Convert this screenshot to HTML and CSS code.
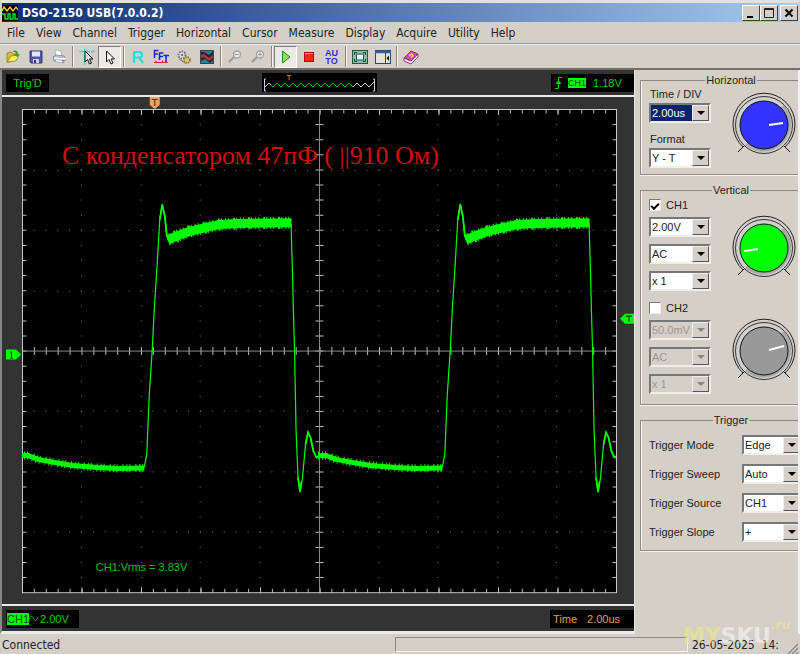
FILE: index.html
```html
<!DOCTYPE html>
<html lang="en">
<head>
<meta charset="utf-8">
<title>DSO-2150 USB(7.0.0.2)</title>
<link rel="stylesheet" href="styles.css">
</head>
<body>
<header class="titlebar">
  <svg class="app-icon" viewBox="0 0 16 16" width="16" height="16" aria-hidden="true"><rect width="16" height="16" fill="#000"/><path d="M0 6 2 2 5 6 8 2 11 6 14 2 16 5" fill="none" stroke="#e8e010" stroke-width="1.3"/><path d="M0 9H3V14H6V9H8V14H11V9H13V14H16" fill="none" stroke="#10e030" stroke-width="1.4"/></svg>
  <h1>DSO-2150 USB(7.0.0.2)</h1>
  <div class="window-buttons">
    <button aria-label="Minimize"><svg viewBox="0 0 12 12" width="12" height="12"><path d="M2 10H8" stroke="#000" stroke-width="2"/></svg></button>
    <button aria-label="Maximize"><svg viewBox="0 0 12 12" width="12" height="12"><path d="M1.500 1.500H10.500V10.500H1.500ZM1 2.500H11" fill="none" stroke="#222"/></svg></button>
    <button class="close" aria-label="Close"><svg viewBox="0 0 12 12" width="12" height="12"><path d="M2.500 2.500 9.500 9.500M9.500 2.500 2.500 9.500" stroke="#000" stroke-width="2"/></svg></button>
  </div>
</header>

<nav class="menu">
  <a href="#">File</a><a href="#">View</a><a href="#">Channel</a><a href="#">Trigger</a><a href="#">Horizontal</a><a href="#">Cursor</a><a href="#">Measure</a><a href="#">Display</a><a href="#">Acquire</a><a href="#">Utility</a><a href="#">Help</a>
</nav>

<div class="toolbar" role="toolbar">
  <div class="tools">
    <button aria-label="Open"><svg viewBox="0 0 16 16"><path d="M2 4 6 3 8 5 11 5V8L5 13 2 13Z" fill="#d8c020" stroke="#857410" stroke-width=".7"/><path d="M2 13 6 7 14 6 11 12Z" fill="#ffec60" stroke="#857410" stroke-width=".7"/><path d="M7 3C10 0 13 2 13 5L14.500 5 12 8 9 5H11C11 3 9 2.500 7 3Z" fill="#3c9c30"/></svg></button>
    <button aria-label="Save"><svg viewBox="0 0 16 16"><path d="M2 2H14V14H3L2 13Z" fill="#5655a8" stroke="#353478"/><path d="M4 2.500H12V7.500H4Z" fill="#e4e8f8"/><path d="M5 10H11V14H5Z" fill="#d0d0e4"/><path d="M6 11H8V14H6Z" fill="#353478"/></svg></button>
    <button aria-label="Print"><svg viewBox="0 0 16 16"><path d="M4 1 10 2 11 8 5 8Z" fill="#fff" stroke="#9aa0b0" stroke-width=".7"/><path d="M2 8 5 6 13 7 15 10 12 14 3 12Z" fill="#b8bfca" stroke="#70757f" stroke-width=".7"/><path d="M3 9 12 10 15 9.500M5 11.500 11 13" stroke="#f8f8f8" fill="none" stroke-width="1.300"/><path d="M11 11.500H13" stroke="#3878c0"/></svg></button>
  </div>
  <div class="tools">
    <button aria-label="Cursor lines"><svg viewBox="0 0 16 16"><path d="M0 2.500H16M5.500 0V16" stroke="#40d8d8" stroke-width="1.300" stroke-dasharray="5 1"/><path d="M6 2V13L8.500 10.500 10.500 15 12.500 14 10.500 10H14Z" fill="#ddd" stroke="#111"/></svg></button>
    <button class="pressed" aria-label="Pointer"><svg viewBox="0 0 16 16"><path d="M4.500 2V13L7 10.500 9 15 11 14 9 10H12.500Z" fill="#fff" stroke="#111"/></svg></button>
  </div>
  <div class="tools">
    <button aria-label="Reference"><svg viewBox="0 0 16 16"><path d="M4 14V3H9C13 3 13 8.500 9 8.500H4M9 8.500 13 14" fill="none" stroke="#28dce4" stroke-width="2.200"/></svg></button>
    <button aria-label="FFT"><svg viewBox="0 0 16 16"><path d="M1.500 9V1.500H5.500M1.500 5H5M6.500 11V4H10.500M6.500 7.500H10M10.500 6.500H16M13 6.500V13" fill="none" stroke="#2222dc" stroke-width="1.600"/><path d="M1 13.500H15M3 11.500V14M9.500 11.500V14" stroke="#e02040" stroke-width="1.200"/></svg></button>
    <button aria-label="Settings"><svg viewBox="0 0 16 16"><circle cx="6" cy="6" r="3.500" fill="#ddd" stroke="#777" stroke-width="2" stroke-dasharray="1.600 1"/><circle cx="11" cy="11" r="3" fill="#e2c36e" stroke="#8d7436" stroke-width="1.800" stroke-dasharray="1.400 1"/><circle cx="6" cy="6" r="1" fill="#555"/><path d="M3 10 9 14" stroke="#777"/></svg></button>
    <button aria-label="Pass fail"><svg viewBox="0 0 16 16"><rect x="1.500" y="1.500" width="13" height="13" fill="#238388" stroke="#304850"/><path d="M2 3 5 3 10 6 14 2V11L11 14 6 10 2 12Z" fill="#26262c"/><path d="M2 6 5 5 10 9 14 6V9L10 12 5 8 2 9Z" fill="#b83246"/></svg></button>
  </div>
  <div class="tools">
    <button aria-label="Zoom out" disabled><svg viewBox="0 0 16 16"><circle cx="10" cy="5.500" r="3.500" fill="#e8e8e8" stroke="#a0a0a0" stroke-width="1.300"/><path d="M8 5.500H12" stroke="#999"/><path d="M7 8 2 13" stroke="#999" stroke-width="2"/></svg></button>
    <button aria-label="Zoom in" disabled><svg viewBox="0 0 16 16"><circle cx="10" cy="5.500" r="3.500" fill="#e8e8e8" stroke="#a0a0a0" stroke-width="1.300"/><path d="M8 5.500H12M10 3.500V7.500" stroke="#999"/><path d="M7 8 2 13" stroke="#999" stroke-width="2"/></svg></button>
  </div>
  <div class="tools">
    <button class="pressed" aria-label="Run"><svg viewBox="0 0 16 16"><path d="M4.500 2 12 8 4.500 14Z" fill="#7fe650" stroke="#218a20"/></svg></button>
    <button aria-label="Stop"><svg viewBox="0 0 16 16"><rect x="3.500" y="3.500" width="9" height="9" fill="#f0281c" stroke="#a81010"/><path d="M4 4.500H12" stroke="#ff8878"/></svg></button>
    <button class="auto" aria-label="Auto set"><span>AU</span><span>TO</span></button>
  </div>
  <div class="tools">
    <button aria-label="Full screen"><svg viewBox="0 0 16 16"><rect x=".5" y="1.500" width="15" height="13" fill="#8cc0a4" stroke="#24533e"/><rect x="4.500" y="5" width="7" height="6" fill="#e0f5fa" stroke="#205070"/><path d="M2.500 6V3.500H5M11 3.500H13.500V6M13.500 10V12.500H11M5 12.500H2.500V10" fill="none" stroke="#174c36"/></svg></button>
    <button aria-label="Toggle panel"><svg viewBox="0 0 16 16"><rect x=".5" y="1.500" width="15" height="13" fill="#e4e1d8" stroke="#34455c"/><path d="M0 3H16" stroke="#2c5ca8" stroke-width="2.500"/><path d="M10.500 4V14" stroke="#34455c"/><path d="M14 6.500V12L11.500 9.200Z" fill="#111"/></svg></button>
  </div>
  <div class="tools">
    <button aria-label="Help"><svg viewBox="0 0 16 16"><path d="M1 9 8 2 15 5 8 12Z" fill="#d84cb0" stroke="#7c1864" stroke-width=".8"/><path d="M1 9V12L8 15 15 8V5L8 12Z" fill="#f4e8f0" stroke="#7c1864" stroke-width=".8"/><path d="M6 6.500 9 5 10 7 8 8.500" fill="none" stroke="#ffe45c" stroke-width="1.300"/></svg></button>
  </div>
</div>

<main class="workspace">
  <section class="scope">
    <div class="strip">
      <div class="readout trig">Trig'D</div>
      <svg class="preview" viewBox="0 0 115 19" width="115" height="19" aria-hidden="true"><rect width="115" height="19" fill="#000"/><path d="M4 6H2.500V18H4M111 6H112.500V18H111" fill="none" stroke="#c8d0e8"/><path d="M7 10 11 14 15 10 19 14 23 10 27 14 31 10 35 14 39 10 43 14 47 10 51 14 55 10 59 14 63 10 67 14 71 10 75 14 79 10 83 14 87 10 91 14" fill="none" stroke="#18b818"/><path d="M3 14 7 10 9 12M91 14 95 10 99 14 103 10 107 14 112 9" fill="none" stroke="#ccd4cc"/><path d="M25 2.500H29M27 2V7" stroke="#c87c34"/></svg>
      <div class="readout level">
        <svg viewBox="0 0 9 13" width="9" height="13" aria-hidden="true"><path d="M1 12.500H4.500V1.500H8" fill="none" stroke="#0d0"/><path d="M1.500 8 4.500 4 7.500 8Z" fill="#0d0"/></svg>
        <span class="chip small">CH1</span><span>1.18V</span>
      </div>
    </div>

    <div class="display">
      <svg class="plot" viewBox="2 97 633 508" role="img" aria-label="Channel 1 waveform">
        <defs>
          <clipPath id="screen"><rect x="22" y="109" width="595" height="484"/></clipPath>
          <path id="edges" d="M144.500 468 147 455 149.500 395 152.500 350 154.500 310 157.500 263 160 220 162.500 204 165 216 167 235 169 241M291.500 224 293 275 294 316 295 350 296.500 430 298.500 478 300.500 493 303 478 306 445 308.500 433 311 438 314 452 317 458 320 456 323 455"/>
          <path id="ringing" d="M160 220 162.500 205 165 216 167 235 169 241M298.500 478 300.500 492 302 482M306 445 308.500 433 311 438 314 452 317 458 320 456 323 455"/>
          <path id="high" d="M168 240 178 236 190 231.500 205 228 218 225 232 224 250 223.500 292 223"/>
          <path id="low" d="M-278 456 -270 456 -260 460 -244 463 -225 466 -200 468 -180 469 -153.500 468.500"/>
        </defs>
        <rect x="22" y="109" width="596" height="485" fill="#000"/>
        <g class="dots">
          <path d="M22 170.500H617M22 230.500H617M22 291.500H617M22 411.500H617M22 472.500H617M22 532.500H617" stroke-dasharray="1 10.920" stroke-dashoffset=".5"/>
          <path d="M81.500 109V593M141.500 109V593M200.500 109V593M260.500 109V593M379.500 109V593M438.500 109V593M498.500 109V593M557.500 109V593" stroke-dasharray="1 14.125"/>
        </g>
        <g class="ticks">
          <path d="M22 111.500H617M22 591.500H617" stroke-width="4" stroke-dasharray="1 10.920"/>
          <path d="M22 112H617M22 591H617" stroke-width="6" stroke-dasharray="1 58.600"/>
          <path d="M24.500 109V593M615.500 109V593" stroke-width="4" stroke-dasharray="1 14.125"/>
          <path d="M22 351.500H617" stroke-width="8" stroke-dasharray="1 10.920"/>
          <path d="M320 109V593" stroke-width="8" stroke-dasharray="1 14.125"/>
        </g>
        <path d="M320 109V593M22 351.500H617" class="axis"/>
        <rect x="22.500" y="109.500" width="595" height="484" class="frame"/>
        <g class="wave" clip-path="url(#screen)">
          <g id="cycle">
            <use href="#edges" stroke-width="1.200"/>
            <use href="#ringing" stroke-width="1.800"/>
            <use href="#high" stroke-width="9"/>
            <use href="#high" stroke-width="12" stroke-dasharray="1 2 1 4 2 1 1 3"/>
            <use href="#low" x="298" stroke-width="5"/>
            <use href="#low" x="298" stroke-width="8" stroke-dasharray="1 3 1 2 1 5"/>
          </g>
          <use href="#cycle" x="298.500"/>
        </g>
        <text x="62" y="164" class="note">С конденсатором 47пФ ( ||910 Ом)</text>
        <text x="96" y="572" class="measure">CH1:Vrms = 3.83V</text>
        <path d="M150 97H160V105L155 109 150 105Z" fill="#f2a25c"/>
        <path d="M152 99.500H158M155 99V106" stroke="#5c3818" stroke-width="1.200"/>
        <path d="M6 350H16L21 355 16 360H6Z" fill="#0f0"/>
        <path d="M11.500 352V358M10 352.500H12M10 358.500H13" stroke="#063c06"/>
        <path d="M621 319 626 314H635V324H626Z" fill="#0f0"/>
        <path d="M627 316.500H633M630 316V322" stroke="#063c06" stroke-width="1.200"/>
      </svg>
    </div>

    <div class="strip">
      <div class="readout channel"><span class="chip">CH1</span><svg viewBox="0 0 9 7" width="9" height="7" aria-hidden="true"><path d="M0 4C2 0 3 1 4.500 3.500S7 7 9 2" fill="none" stroke="#0d0"/></svg><span>2.00V</span></div>
      <div class="readout time"><span>Time</span><span>2.00us</span></div>
    </div>
  </section>

  <aside class="panel">
    <fieldset class="group horizontal">
      <legend>Horizontal</legend>
      <div class="fields">
        <label for="timediv">Time / DIV</label>
        <div class="combo active"><select id="timediv"><option>2.00us</option></select><span class="arrow"></span></div>
        <label for="format" class="second">Format</label>
        <div class="combo"><select id="format"><option>Y - T</option></select><span class="arrow"></span></div>
      </div>
      <svg class="knob" viewBox="0 0 66 66" width="66" height="66" aria-hidden="true"><path d="M14 53 7 60M52 53 59 60" stroke="#111"/><path d="M12 55A31 31 0 1 1 54 55" fill="none" stroke="#222"/><circle cx="33" cy="33" r="28.500" fill="#d0d0d0" stroke="#333"/><path d="M53 13A28 28 0 0 1 14 53L17 50A24 24 0 0 0 49 16Z" fill="#aaa"/><circle cx="33" cy="33" r="24" fill="#3333ff" stroke="#111"/><path d="M38 33 52 31" stroke="#fff" stroke-width="2"/></svg>
    </fieldset>

    <fieldset class="group vertical">
      <legend>Vertical</legend>
      <div class="channel-row">
        <div class="fields">
          <label class="check"><input type="checkbox" checked>CH1</label>
          <div class="combo"><select aria-label="CH1 volts per division"><option>2.00V</option></select><span class="arrow"></span></div>
          <div class="combo"><select aria-label="CH1 coupling"><option>AC</option></select><span class="arrow"></span></div>
          <div class="combo"><select aria-label="CH1 probe"><option>x 1</option></select><span class="arrow"></span></div>
        </div>
        <svg class="knob" viewBox="0 0 66 66" width="66" height="66" aria-hidden="true"><path d="M14 53 7 60M52 53 59 60" stroke="#111"/><path d="M12 55A31 31 0 1 1 54 55" fill="none" stroke="#222"/><circle cx="33" cy="33" r="28.500" fill="#d0d0d0" stroke="#333"/><path d="M53 13A28 28 0 0 1 14 53L17 50A24 24 0 0 0 49 16Z" fill="#aaa"/><circle cx="33" cy="33" r="24" fill="#00ff00" stroke="#111"/><path d="M13 36 27 34" stroke="#fff" stroke-width="2"/></svg>
      </div>
      <div class="channel-row">
        <div class="fields">
          <label class="check"><input type="checkbox">CH2</label>
          <div class="combo off"><select aria-label="CH2 volts per division" disabled><option>50.0mV</option></select><span class="arrow"></span></div>
          <div class="combo off"><select aria-label="CH2 coupling" disabled><option>AC</option></select><span class="arrow"></span></div>
          <div class="combo off"><select aria-label="CH2 probe" disabled><option>x 1</option></select><span class="arrow"></span></div>
        </div>
        <svg class="knob" viewBox="0 0 66 66" width="66" height="66" aria-hidden="true"><path d="M14 53 7 60M52 53 59 60" stroke="#111"/><path d="M12 55A31 31 0 1 1 54 55" fill="none" stroke="#222"/><circle cx="33" cy="33" r="28.500" fill="#d0d0d0" stroke="#333"/><path d="M53 13A28 28 0 0 1 14 53L17 50A24 24 0 0 0 49 16Z" fill="#aaa"/><circle cx="33" cy="33" r="24" fill="#999" stroke="#111"/><path d="M38 32 53 28" stroke="#fff" stroke-width="2"/></svg>
      </div>
    </fieldset>

    <fieldset class="group trigger">
      <legend>Trigger</legend>
      <label for="mode">Trigger Mode</label>
      <div class="combo"><select id="mode"><option>Edge</option></select><span class="arrow"></span></div>
      <label for="sweep">Trigger Sweep</label>
      <div class="combo"><select id="sweep"><option>Auto</option></select><span class="arrow"></span></div>
      <label for="source">Trigger Source</label>
      <div class="combo"><select id="source"><option>CH1</option></select><span class="arrow"></span></div>
      <label for="slope">Trigger Slope</label>
      <div class="combo"><select id="slope"><option>+</option></select><span class="arrow"></span></div>
    </fieldset>
  </aside>
</main>

<footer class="status">
  <span class="state">Connected</span>
  <span class="well"></span>
  <span class="clock">26-05-2025&nbsp; 14:</span>
  <svg class="grip" viewBox="0 0 12 12" width="12" height="12" aria-hidden="true"><path d="M1 12 12 1M5 12 12 5M9 12 12 9" stroke="#888" stroke-width="1.300"/></svg>
  <div class="watermark"><span class="my">MY</span><span>SKU</span><i>.ru</i></div>
</footer>
</body>
</html>
```

FILE: styles.css
```css
* { box-sizing: border-box; }

body {
  margin: 0;
  min-height: 100vh;
  display: flex;
  flex-direction: column;
  overflow: hidden;
  background: #d4d0c8;
  color: #222;
  font: 11px/14px "Liberation Sans", Arial, sans-serif;
}

button, select, input { font: inherit; color: inherit; margin: 0; padding: 0; }

/* Title bar */
.titlebar {
  display: flex;
  align-items: center;
  height: 22px;
  border-top: 3px solid #e4e1da;
  border-left: 2px solid #d4d0c8;
  border-right: 2px solid #d4d0c8;
  background: linear-gradient(90deg, #0c2a74, #a6caf0);
}
.titlebar h1 {
  margin: 0 0 0 4px;
  flex: 1;
  color: #fff;
  font: bold 12px/16px "DejaVu Sans Condensed", "DejaVu Sans", sans-serif;
}
.window-buttons { display: flex; }
.window-buttons button {
  width: 18px;
  height: 16px;
  display: grid;
  place-items: center;
  background: #d4d0c8;
  border: 1px solid;
  border-color: #fff #404040 #404040 #fff;
}
.window-buttons .close { margin-left: 2px; }

/* Menu */
.menu {
  display: flex;
  gap: 11px;
  padding: 4px 7px 3px;
  font: 12px/14px "DejaVu Sans Condensed", "DejaVu Sans", sans-serif;
  border-bottom: 1px solid #999;
}
.menu a { color: #222; text-decoration: none; }

/* Toolbar */
.toolbar {
  display: flex;
  gap: 5px;
  padding: 1px 1px 0;
  height: 26px;
  border-top: 1px solid #eee;
  border-bottom: 2px solid #716f6a;
}
.tools { display: flex; position: relative; }
.tools + .tools::before {
  content: "";
  position: absolute;
  left: -3px;
  top: 0;
  bottom: 1px;
  border-left: 1px solid #8a8780;
  border-right: 1px solid #f4f2ee;
}
.tools button {
  width: 23px;
  height: 22px;
  display: grid;
  place-items: center;
  border: 1px solid transparent;
  background: none;
}
.tools svg { width: 16px; height: 16px; }
.tools .pressed { background: #eceae6; border-color: #808080 #fff #fff #808080; }
.tools .auto {
  align-content: center;
  color: #2c2ce0;
  font: bold 9px/8px "Liberation Sans", sans-serif;
}

/* Workspace */
.workspace { flex: 1; display: flex; min-height: 0; }
.scope {
  flex: 1;
  min-width: 0;
  display: flex;
  flex-direction: column;
  background: #333;
  border: solid;
  border-width: 0 1px 3px 2px;
  border-color: #777 #e8e5de #eceae4 #888;
}
.strip {
  display: flex;
  justify-content: space-between;
  align-items: center;
  height: 25px;
  padding: 0 0 0 4px;
}
.display {
  flex: 1;
  min-height: 0;
  display: flex;
  border: solid #e8e8e4;
  border-width: 2px 0;
}
.plot { width: 100%; height: 100%; display: block; }
.readout {
  display: flex;
  align-items: center;
  height: 18px;
  background: #000;
  color: #10cc10;
}
.trig { width: 43px; justify-content: center; }
.level { width: 83px; gap: 5px; padding-left: 3px; }
.strip .preview { margin-left: 125px; margin-right: 86px; }
.chip { background: #0f0; color: #054805; font-size: 11px; line-height: 12px; }
.chip.small { font-size: 9px; line-height: 10px; margin-right: 2px; }
.channel { width: 73px; padding-left: 1px; }
.channel span:last-child { margin-left: 2px; }
.time { width: 84px; gap: 10px; padding-left: 3px; color: #e09c5c; }

.dots path { fill: none; stroke: #777; stroke-width: 1; }
.ticks path { fill: none; stroke: #bbb; }
.axis { fill: none; stroke: #8c8c8c; stroke-width: 1; }
.frame { fill: none; stroke: #ccc; }
.wave { fill: none; stroke: #0f0; }
.note { fill: #d40c0c; font: 26px "Liberation Serif", "Times New Roman", serif; }
.measure { fill: #12c012; font: 11px "Liberation Sans", Arial, sans-serif; }

/* Side panel */
.panel {
  width: 165px;
  padding: 3px 0 0 5px;
  overflow: hidden;
  border-right: 2px solid #f4f2ee;
}
.group {
  margin: 0 -16px 8px 0;
  min-width: 0;
  padding: 0 0 0 8px;
  border: 1px solid #8c8982;
  box-shadow: inset 1px 0 #f6f4f0, 0 1px #f6f4f0;
}
.group legend { margin: 0 auto; padding: 0 1px; }
.fields { width: 62px; display: flex; flex-direction: column; }
.horizontal { display: flex; gap: 20px; height: 102px; }
.horizontal label { padding-left: 1px; }
.horizontal .combo { margin-top: 2px; }
.horizontal .second { margin-top: 9px; }
.horizontal .knob { margin-top: 5px; }
.vertical { height: 222px; }
.channel-row { display: flex; gap: 20px; height: 103px; align-items: flex-start; }
.channel-row .fields { gap: 7px; }
.knob { flex: none; }
.channel-row .knob { margin-top: 18px; }
.channel-row .check { margin-bottom: -3px; }
.check { display: flex; align-items: center; gap: 5px; height: 16px; }
.check input {
  appearance: none;
  width: 12px;
  height: 12px;
  background: #fff;
  border: 1px solid;
  border-color: #777 #eee #eee #777;
  display: grid;
  place-items: center;
}
.check input:checked::after {
  content: "";
  width: 6px;
  height: 3px;
  border: solid #000;
  border-width: 0 0 2px 2px;
  transform: rotate(-45deg);
}
.combo {
  display: grid;
  grid-template-columns: 1fr 17px;
  height: 20px;
  background: #fff;
  border: 2px solid;
  border-color: #777 #f0eee8 #f0eee8 #777;
}
.combo select {
  grid-area: 1 / 1 / 2 / 3;
  appearance: none;
  width: 100%;
  border: 0;
  border-radius: 0;
  background: none;
  padding-left: 1px;
  outline: 0;
}
.combo .arrow {
  grid-area: 1 / 2;
  pointer-events: none;
  display: grid;
  place-items: center;
  background: #d4d0c8;
  border: 1px solid;
  border-color: #eee #555 #555 #eee;
}
.combo .arrow::before {
  content: "";
  border: 4px solid transparent;
  border-top-color: #000;
  border-bottom: 0;
}
.active select { color: #fff; background: #0a246a; }
.combo.off { background: #d4d0c8; color: #9a9790; }
.off select { opacity: 1; }
.off .arrow::before { border-top-color: #8a8780; }

.trigger {
  display: grid;
  grid-template-columns: 93px 60px;
  row-gap: 9px;
  align-items: center;
  padding-top: 8px;
  padding-bottom: 8px;
}

/* Status bar */
.status {
  position: relative;
  display: flex;
  align-items: center;
  height: 21px;
  padding: 0 2px;
  font: 12px/16px "DejaVu Sans Condensed", "DejaVu Sans", sans-serif;
}
.state { flex: 394; }
.well {
  flex: 291;
  height: 15px;
  border: 1px solid;
  border-color: #888 #f4f2ee #f4f2ee #888;
}
.clock { margin-left: 4px; width: 94px; white-space: nowrap; }
.grip { align-self: flex-end; flex: none; }
.watermark {
  position: absolute;
  right: 10px;
  bottom: 8px;
  display: flex;
  font: bold 22px/22px "DejaVu Sans", sans-serif;
  color: #fff;
  opacity: .5;
  pointer-events: none;
}
.watermark .my, .watermark i { color: #f4ec70; }
.watermark i { font-size: 12px; line-height: 12px; margin-top: -6px; }
```
